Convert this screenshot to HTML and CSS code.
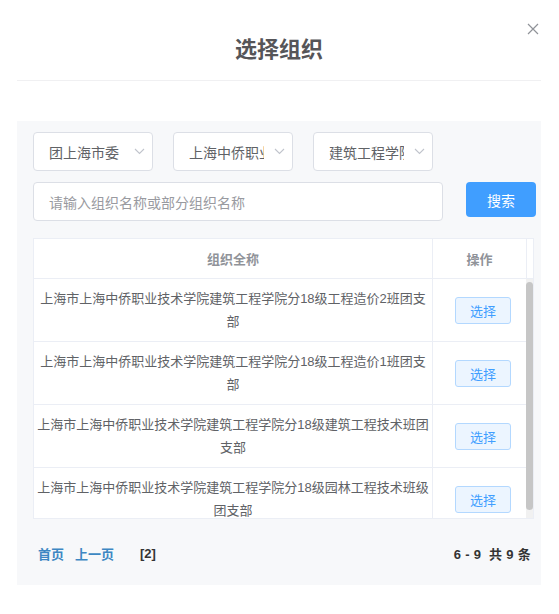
FILE: index.html
```html
<!DOCTYPE html>
<html lang="zh-CN">
<head>
<meta charset="utf-8">
<title>选择组织</title>
<link rel="stylesheet" href="styles.css">
</head>
<body>
<div class="dialog">
  <div class="dialog-header">
    <h2 class="dialog-title">选择组织</h2>
    <button class="close-btn" aria-label="关闭">
      <svg width="12" height="12" viewBox="0 0 12 12"><path d="M1 1L11 11M11 1L1 11" stroke="#909399" stroke-width="1.2" fill="none"/></svg>
    </button>
  </div>
  <div class="spacer"></div>
  <div class="panel">
    <div class="select-row">
      <div class="select"><span class="select-text">团上海市委</span><svg class="arrow" width="11" height="7" viewBox="0 0 11 7"><path d="M1 1L5.5 5.5L10 1" stroke="#c0c4cc" stroke-width="1.1" fill="none"/></svg></div>
      <div class="select"><span class="select-text">上海中侨职业技术学院</span><svg class="arrow" width="11" height="7" viewBox="0 0 11 7"><path d="M1 1L5.5 5.5L10 1" stroke="#c0c4cc" stroke-width="1.1" fill="none"/></svg></div>
      <div class="select"><span class="select-text">建筑工程学院</span><svg class="arrow" width="11" height="7" viewBox="0 0 11 7"><path d="M1 1L5.5 5.5L10 1" stroke="#c0c4cc" stroke-width="1.1" fill="none"/></svg></div>
    </div>
    <div class="search-row">
      <div class="search-input"><span class="placeholder">请输入组织名称或部分组织名称</span></div>
      <button class="search-btn">搜索</button>
    </div>
    <div class="table">
      <div class="table-head">
        <div class="th th-name">组织全称</div>
        <div class="th th-op">操作</div>
        <div class="th-gutter"></div>
      </div>
      <div class="table-body">
        <div class="rows">
          <div class="tr">
            <div class="td td-name">上海市上海中侨职业技术学院建筑工程学院分18级工程造价2班团支部</div>
            <div class="td td-op"><button class="pick-btn">选择</button></div>
          </div>
          <div class="tr">
            <div class="td td-name">上海市上海中侨职业技术学院建筑工程学院分18级工程造价1班团支部</div>
            <div class="td td-op"><button class="pick-btn">选择</button></div>
          </div>
          <div class="tr">
            <div class="td td-name">上海市上海中侨职业技术学院建筑工程学院分18级建筑工程技术班团支部</div>
            <div class="td td-op"><button class="pick-btn">选择</button></div>
          </div>
          <div class="tr">
            <div class="td td-name">上海市上海中侨职业技术学院建筑工程学院分18级园林工程技术班级团支部</div>
            <div class="td td-op"><button class="pick-btn">选择</button></div>
          </div>
        </div>
        <div class="scrollbar"><div class="scroll-thumb"></div></div>
      </div>
    </div>
    <div class="pager">
      <div class="pager-left">
        <a class="pager-link">首页</a>
        <a class="pager-link">上一页</a>
        <span class="pager-current">[2]</span>
      </div>
      <div class="pager-info">6 - 9&nbsp; 共 9 条</div>
    </div>
  </div>
</div>
</body>
</html>
```
FILE: styles.css
```css
* { box-sizing: border-box; }
html, body { margin: 0; padding: 0; background: #fff; }
body {
  width: 559px;
  height: 614px;
  font-family: "Liberation Sans", "Noto Sans CJK SC", sans-serif;
  color: #606266;
  overflow: hidden;
}
.dialog {
  padding: 0 18px 0 17px;
}
.dialog-header {
  position: relative;
  height: 81px;
  border-bottom: 1px solid #f0f0f2;
  padding-top: 35px;
}
.dialog-title {
  margin: 0;
  text-align: center;
  font-size: 22px;
  line-height: 30px;
  font-weight: bold;
  color: #555558;
}
.close-btn {
  position: absolute;
  right: 0;
  top: 21px;
  width: 16px;
  height: 16px;
  padding: 2px;
  border: 0;
  background: none;
  display: flex;
  align-items: center;
  justify-content: center;
}
.spacer { height: 40px; }
.panel {
  background: #f7f8fa;
  padding: 11px 0 0 16px;
  height: 464px;
}
.select-row {
  display: flex;
  gap: 20px;
}
.select {
  width: 120px;
  height: 39px;
  background: #fff;
  border: 1px solid #dcdfe6;
  border-radius: 4px;
  display: flex;
  align-items: center;
  padding-left: 15px;
}
.select-text {
  width: 75px;
  overflow: hidden;
  white-space: nowrap;
  font-size: 14px;
  color: #606266;
}
.arrow {
  margin-left: 10px;
}
.search-row {
  display: flex;
  margin-top: 11px;
  align-items: flex-start;
}
.search-input {
  width: 410px;
  height: 39px;
  background: #fff;
  border: 1px solid #dcdfe6;
  border-radius: 4px;
  padding-left: 15px;
  display: flex;
  align-items: center;
}
.placeholder {
  font-size: 14px;
  color: #999aa0;
}
.search-btn {
  margin-left: 23px;
  width: 70px;
  height: 35px;
  border: 0;
  border-radius: 4px;
  background: #409eff;
  color: #fff;
  font-family: inherit;
  font-size: 14px;
}
.table {
  margin-top: 17px;
  width: 501px;
  border: 1px solid #ebeef5;
  border-bottom: 0;
  background: #fff;
}
.table-head {
  display: flex;
  height: 40px;
  border-bottom: 1px solid #ebeef5;
}
.th {
  display: flex;
  align-items: center;
  justify-content: center;
  font-size: 13px;
  font-weight: bold;
  color: #909399;
}
.th-name {
  width: 399px;
  border-right: 1px solid #ebeef5;
}
.th-op {
  width: 94px;
  border-right: 1px solid #ebeef5;
}
.th-gutter { flex: 1; }
.table-body {
  display: flex;
  height: 240px;
  border-bottom: 1px solid #ebeef5;
}
.rows {
  flex: 1;
  overflow: hidden;
}
.scrollbar {
  width: 7px;
  background: #f1f1f1;
  padding-top: 3px;
}
.scroll-thumb {
  height: 228px;
  background: #c6c6c6;
  border-radius: 4px;
}
.tr {
  display: flex;
  height: 63px;
  border-bottom: 1px solid #ebeef5;
}
.td {
  display: flex;
  align-items: center;
  justify-content: center;
}
.td-name {
  width: 399px;
  flex-shrink: 0;
  border-right: 1px solid #ebeef5;
  padding: 0 3px;
  font-size: 13px;
  line-height: 23px;
  text-align: center;
  color: #606266;
}
.td-op { flex: 1; }
.pick-btn {
  width: 56px;
  height: 27px;
  margin-left: 7px;
  background: #ecf5ff;
  border: 1px solid #b3d8ff;
  border-radius: 3px;
  color: #409eff;
  font-family: inherit;
  font-size: 13px;
  padding: 0;
}
.pager {
  display: flex;
  justify-content: space-between;
  align-items: center;
  height: 68px;
  padding: 0 10px 0 5px;
}
.pager-left {
  display: flex;
  align-items: center;
  font-size: 13px;
  font-weight: bold;
}
.pager-link {
  color: #3d87c3;
  margin-right: 11px;
}
.pager-current {
  color: #333;
  margin-left: 15px;
}
.pager-info {
  font-size: 13px;
  font-weight: bold;
  color: #333;
  letter-spacing: 0.3px;
}
```
